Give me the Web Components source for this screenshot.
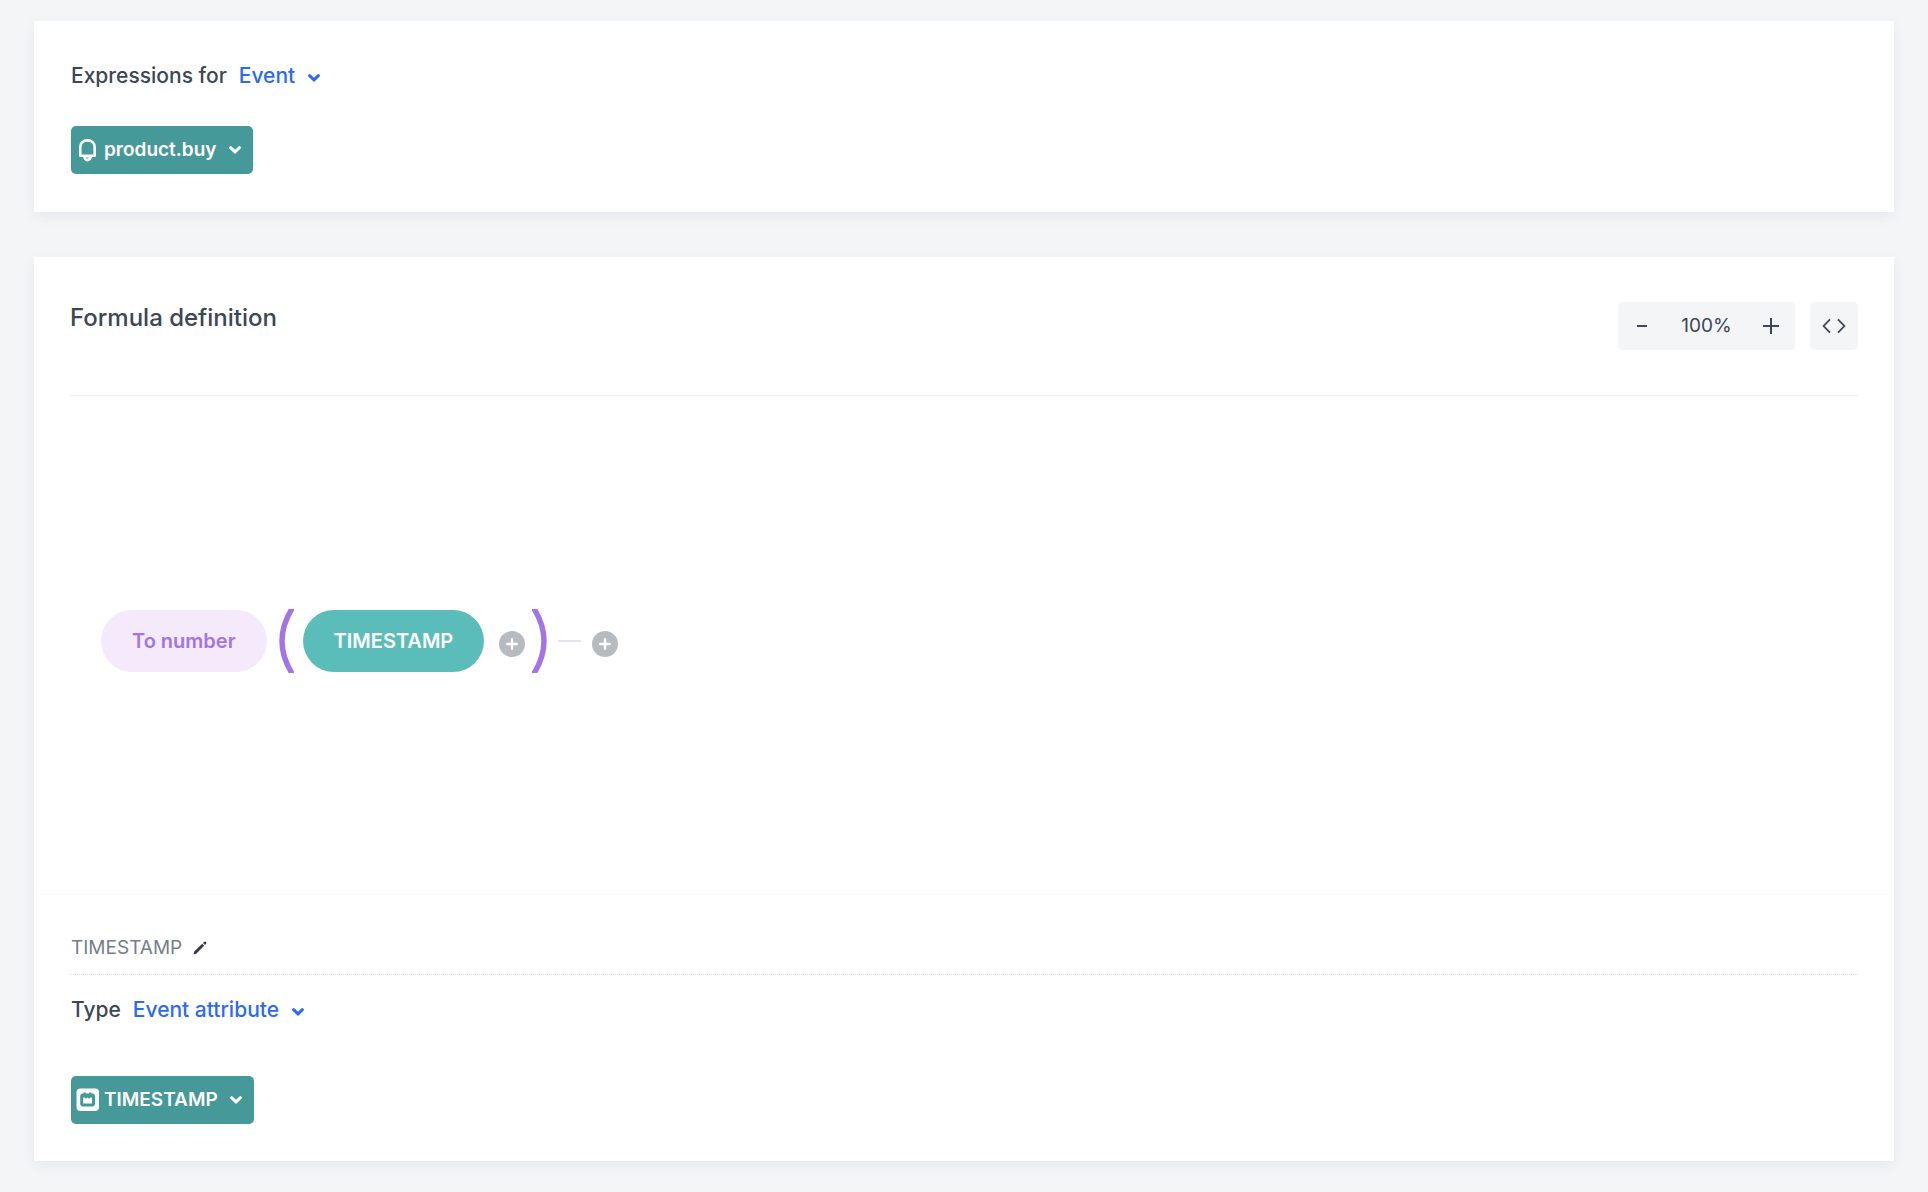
<!DOCTYPE html>
<html lang="en">
<head>
<meta charset="utf-8">
<title>Formula definition</title>
<style>
    body{
        margin: 0;
        background-color: #f3f5f7;
        color: #3c4655;
        font-family: Inter, "Liberation Sans", sans-serif;
        font-size: 19px;
        font-weight: 500;
        line-height: 28px;
    }
</style>
</head>
<body>

<expression-page></expression-page>

<script>
//CHEVRON - shared by all the drop-downs
const chevron = `<svg class="chevron" width="12" height="8" viewBox="0 0 12 8" aria-hidden="true"><path d="M1.600 1.700 L6 5.900 L10.400 1.700" fill="none" stroke="currentColor" stroke-width="3" stroke-linecap="round"/></svg>`;

const chipIcons = {
    bell: `<svg width="24" height="24" viewBox="0 0 24 24" aria-hidden="true">
        <path d="M4.300 17.800 V9.400 C4.300 5 7.200 2.400 11.500 2.400 S18.700 5 18.700 9.400 V17.800 Z" fill="none" stroke="#fff" stroke-width="2.6" stroke-linejoin="round"/>
        <path d="M6.900 18 H16.100 C15.700 21.800 14.100 23.400 11.500 23.400 S7.300 21.800 6.900 18 Z" fill="#fff"/>
        <path d="M9.900 19.600 H13.100 L11.500 20.800 Z" fill="#469999"/>
    </svg>`,
    calendar: `<svg width="24" height="24" viewBox="0 0 24 24" aria-hidden="true">
        <rect x="0.500" y="0.500" width="22.500" height="22.500" rx="4" fill="#fff"/>
        <path d="M7 5.500 H7.500 V4.500 H9.900 V5.500 H13.100 V4.500 H15.500 V5.500 H16 Q19 5.500 19 8.500 V15.500 Q19 18.500 16 18.500 H7 Q4.200 18.500 4.200 15.500 V8.500 Q4.200 5.500 7 5.500 Z" fill="#469999"/>
        <path d="M7.200 9.600 H8.500 L10 10.800 L11.500 9.400 L13 10.800 L14.500 9.600 H16 V15.500 H7.200 Z" fill="#fff"/>
    </svg>`
};

//CARD
var template_card = document.createElement("template");
template_card.innerHTML = `
<style>
:host{
    display: flex;
    flex-direction: column;
    background-color: #fff;
    box-shadow: 0 4px 12px rgba(60, 70, 85, 0.07);
}
</style>
<slot></slot>
`;

class PanelCard extends HTMLElement {
    constructor(){
        super();
        this.attachShadow({mode:"open"});
    }

    connectedCallback(){
        this.shadowRoot.appendChild(template_card.content.cloneNode(true));
    }
}
customElements.define("panel-card", PanelCard)

//LABEL WITH BLUE DROP-DOWN
var template_linkSelect = document.createElement("template");
template_linkSelect.innerHTML = `
<style>
:host{
    display: flex;
    font-size: 21px;
}
label{
    margin-right: 12px;
}
.box{
    display: grid;
    align-items: center;
    color: #2c69f6;
}
select{
    grid-area: 1 / 1;
    appearance: none;
    border: 0;
    margin: 0;
    padding: 0 24px 0 0;
    background: none;
    color: inherit;
    font: inherit;
    cursor: pointer;
}
.chevron{
    grid-area: 1 / 1;
    justify-self: end;
    margin-top: 4px;
    pointer-events: none;
}
</style>
<label for="pick"></label>
<div class="box">
    <select id="pick"><option></option></select>
    ${chevron}
</div>
`;

class LinkSelect extends HTMLElement {
    constructor(){
        super();
        this.attachShadow({mode:"open"});
    }

    connectedCallback(){
        this.shadowRoot.appendChild(template_linkSelect.content.cloneNode(true));
        this.shadowRoot.querySelector("label").textContent = this.getAttribute("label");
        this.shadowRoot.querySelector("option").textContent = this.getAttribute("value");
    }
}
customElements.define("link-select", LinkSelect)

//GREEN CHIP DROP-DOWN
var template_chipSelect = document.createElement("template");
template_chipSelect.innerHTML = `
<style>
:host{
    display: grid;
    width: fit-content;
    align-items: center;
    border-radius: 5px;
    background-color: #469999;
    color: #fff;
    font-weight: 600;
}
select{
    grid-area: 1 / 1;
    height: 48px;
    appearance: none;
    border: 0;
    margin: 0;
    padding: 0 36px 0 33px;
    border-radius: 5px;
    background: none;
    color: inherit;
    font: inherit;
    cursor: pointer;
}
.icon{
    grid-area: 1 / 1;
    display: flex;
    margin-left: 5px;
    pointer-events: none;
}
.chevron{
    grid-area: 1 / 1;
    justify-self: end;
    margin-right: 12px;
    pointer-events: none;
}
option{
    color: #3c4655;
}
</style>
<select><option></option></select>
<span class="icon"></span>
${chevron}
`;

class ChipSelect extends HTMLElement {
    constructor(){
        super();
        this.attachShadow({mode:"open"});
    }

    connectedCallback(){
        this.shadowRoot.appendChild(template_chipSelect.content.cloneNode(true));
        this.shadowRoot.querySelector("option").textContent = this.getAttribute("value");
        this.shadowRoot.querySelector("select").setAttribute("aria-label", this.getAttribute("label"));
        this.shadowRoot.querySelector(".icon").innerHTML = chipIcons[this.getAttribute("icon")];
    }
}
customElements.define("chip-select", ChipSelect)

//ZOOM BAR AND CODE BUTTON
var template_canvasTools = document.createElement("template");
template_canvasTools.innerHTML = `
<style>
:host{
    display: flex;
    gap: 15px;
}
.zoom{
    display: flex;
    align-items: center;
    border-radius: 5px;
    background-color: #f3f5f7;
}
button{
    display: flex;
    align-items: center;
    justify-content: center;
    width: 48px;
    height: 48px;
    border: 0;
    padding: 0;
    border-radius: 5px;
    background-color: #f3f5f7;
    color: inherit;
    cursor: pointer;
}
#level{
    width: 81px;
    text-align: center;
    font-weight: 400;
}
</style>
<div class="zoom">
    <button id="out" aria-label="Zoom out"><svg width="16" height="16" viewBox="0 0 16 16"><path d="M3 8 H13" stroke="currentColor" stroke-width="2"/></svg></button>
    <span id="level">100%</span>
    <button id="in" aria-label="Zoom in"><svg width="16" height="16" viewBox="0 0 16 16"><path d="M0 8 H16 M8 0 V16" stroke="currentColor" stroke-width="2"/></svg></button>
</div>
<button aria-label="Show code"><svg width="24" height="16" viewBox="0 0 24 16"><path d="M8 1.300 L1.600 8 L8 14.700 M16 1.300 L22.400 8 L16 14.700" fill="none" stroke="currentColor" stroke-width="1.800"/></svg></button>
`;

class CanvasTools extends HTMLElement {
    constructor(){
        super();
        this.attachShadow({mode:"open"});
        this.level = 100;
    }

    connectedCallback(){
        this.shadowRoot.appendChild(template_canvasTools.content.cloneNode(true));
        this.shadowRoot.querySelector("#out").onclick = () => this.zoom(-10);
        this.shadowRoot.querySelector("#in").onclick = () => this.zoom(10);
    }

    zoom(step){
        this.level = Math.min(200, Math.max(10, this.level + step));
        this.shadowRoot.querySelector("#level").textContent = this.level + "%";
    }
}
customElements.define("canvas-tools", CanvasTools)

//FORMULA PILL
var template_pill = document.createElement("template");
template_pill.innerHTML = `
<style>
:host{
    display: block;
}
button{
    height: 62px;
    border: 0;
    padding: 0 31px;
    border-radius: 31px;
    background-color: #5bbdb9;
    color: #fff;
    font: inherit;
    font-size: 20px;
    font-weight: 600;
    cursor: pointer;
}
:host([kind="function"]) button{
    background-color: #f5eafc;
    color: #a274e8;
}
</style>
<button><slot></slot></button>
`;

class FormulaPill extends HTMLElement {
    constructor(){
        super();
        this.attachShadow({mode:"open"});
    }

    connectedCallback(){
        this.shadowRoot.appendChild(template_pill.content.cloneNode(true));
    }
}
customElements.define("formula-pill", FormulaPill)

//ROUND ADD BUTTON
var template_add = document.createElement("template");
template_add.innerHTML = `
<style>
:host{
    display: block;
    padding-top: 6px;
}
button{
    display: flex;
    align-items: center;
    justify-content: center;
    width: 26px;
    height: 26px;
    border: 0;
    padding: 0;
    border-radius: 50%;
    background-color: #b6bbc0;
    cursor: pointer;
}
</style>
<button aria-label="Add"><svg width="12" height="12" viewBox="0 0 12 12"><path d="M1.200 6 H10.800 M6 1.200 V10.800" stroke="#fff" stroke-width="2.400" stroke-linecap="round"/></svg></button>
`;

class AddButton extends HTMLElement {
    constructor(){
        super();
        this.attachShadow({mode:"open"});
    }

    connectedCallback(){
        this.shadowRoot.appendChild(template_add.content.cloneNode(true));
    }
}
customElements.define("add-button", AddButton)

//THE WHOLE PAGE
var template_page = document.createElement("template");
template_page.innerHTML = `
<style>
:host{
    display: flex;
    flex-direction: column;
    gap: 45px;
    box-sizing: border-box;
    min-height: 100vh;
    padding: 21px 34px 31px;
}
.expressions{
    padding: 41px 36px 38px 37px;
    gap: 36px;
}
.formula{
    flex: 1;
}
header{
    display: flex;
    justify-content: space-between;
    margin: 0 36px;
    padding: 45px 0;
    border-bottom: 1px solid #f1f2f4;
}
h2{
    margin: 0;
    font-size: 24px;
    font-weight: 500;
    line-height: 32px;
}
.canvas{
    flex: 1;
    display: flex;
    align-items: center;
    min-height: 160px;
    padding: 0 67px 8px;
}
.args{
    display: flex;
    align-items: center;
    margin: 0 11px 0 12px;
}
.args formula-pill{
    margin: 0 15px 0 9px;
}
.args add-button{
    margin-right: 7px;
}
.dash{
    width: 23px;
    height: 2px;
    margin-right: 11px;
    background-color: #e1e7ec;
}
.details{
    padding: 39px 36px 37px 37px;
    border-top: 1px solid #fbfbfc;
}
.name{
    display: flex;
    align-items: center;
    gap: 11px;
    padding-bottom: 12px;
    margin-bottom: 21px;
    border-bottom: 1px dotted #dcdfe2;
    color: #757e89;
    font-weight: 400;
}
.name button{
    display: flex;
    border: 0;
    padding: 0;
    background: none;
    color: #333b47;
    cursor: pointer;
}
.details chip-select{
    margin-top: 52px;
}
</style>

<panel-card class="expressions">
    <link-select label="Expressions for" value="Event"></link-select>
    <chip-select icon="bell" label="Event name" value="product.buy"></chip-select>
</panel-card>

<panel-card class="formula">
    <header>
        <h2>Formula definition</h2>
        <canvas-tools></canvas-tools>
    </header>
    <div class="canvas">
        <formula-pill kind="function">To number</formula-pill>
        <div class="args">
            <svg width="15" height="64" viewBox="0 0 15 64"><path d="M14 -2 Q-8 32 14 66" fill="none" stroke="#a274e8" stroke-width="5.400"/></svg>
            <formula-pill>TIMESTAMP</formula-pill>
            <add-button></add-button>
            <svg width="15" height="64" viewBox="0 0 15 64"><path d="M1 -2 Q23 32 1 66" fill="none" stroke="#a274e8" stroke-width="5.400"/></svg>
        </div>
        <div class="dash"></div>
        <add-button></add-button>
    </div>
    <section class="details">
        <div class="name">
            <span>TIMESTAMP</span>
            <button aria-label="Rename"><svg width="14" height="14" viewBox="0 0 14 14"><path d="M0.500 13.500 L1.200 10.600 L9.200 2.800 L11.200 4.800 L3.200 12.700 Z M10 2 L11.400 0.700 Q12.200 0.200 12.900 0.900 Q13.700 1.700 13.200 2.500 L12 4 Z" fill="currentColor"/></svg></button>
        </div>
        <link-select label="Type" value="Event attribute"></link-select>
        <chip-select icon="calendar" label="Attribute" value="TIMESTAMP"></chip-select>
    </section>
</panel-card>
`;

class ExpressionPage extends HTMLElement {
    constructor(){
        super();
        this.attachShadow({mode:"open"});
    }

    connectedCallback(){
        this.shadowRoot.appendChild(template_page.content.cloneNode(true));
    }
}
customElements.define("expression-page", ExpressionPage)
</script>
</body>
</html>
